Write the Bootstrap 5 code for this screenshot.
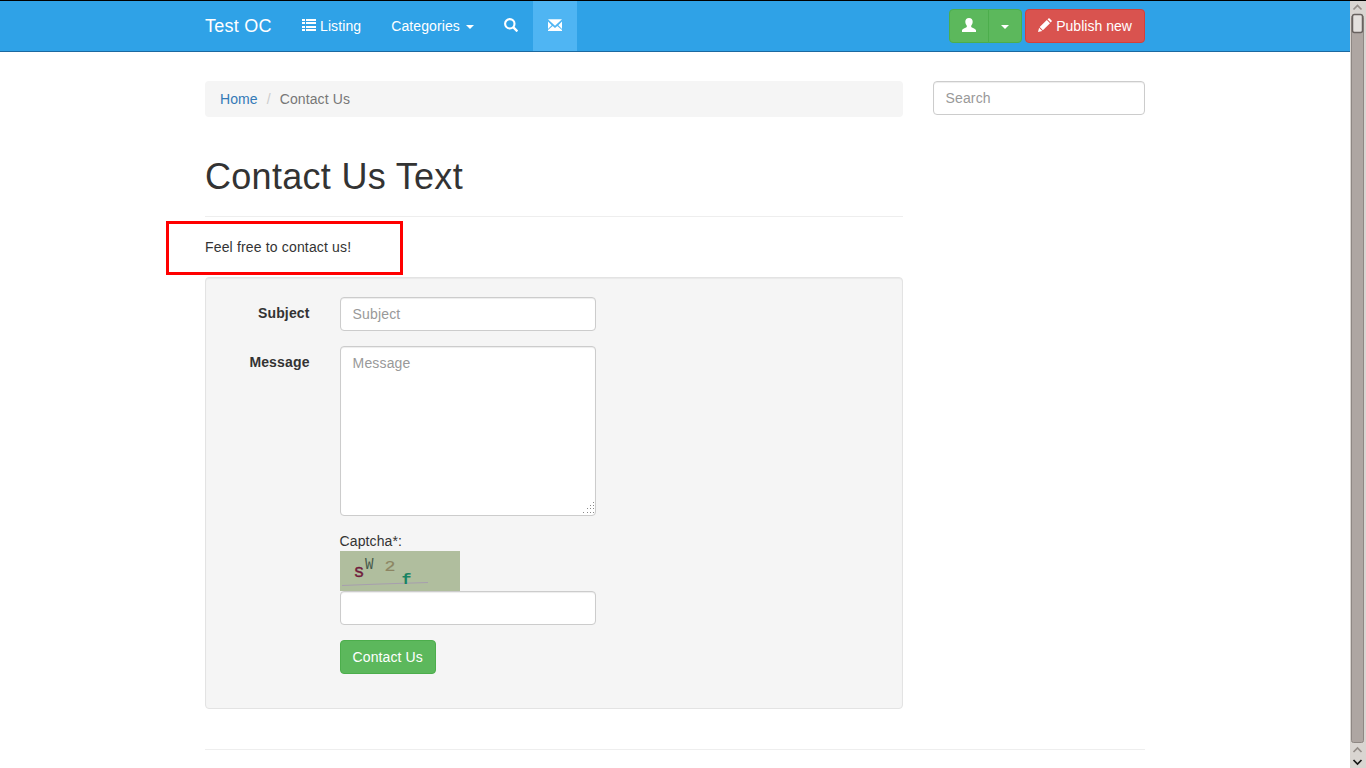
<!DOCTYPE html>
<html lang="en">
<head>
<meta charset="utf-8">
<meta name="viewport" content="width=device-width, initial-scale=1">
<title>Contact Us - Test OC</title>
<link href="https://cdn.jsdelivr.net/npm/bootstrap@5.3.0/dist/css/bootstrap.min.css" rel="stylesheet">
<script src="https://cdn.jsdelivr.net/npm/bootstrap@5.3.0/dist/js/bootstrap.bundle.min.js" defer></script>
<style>
html, body { height: 100%; overflow: hidden; }
body { font: 14px/20px "Liberation Sans", Arial, sans-serif; letter-spacing: .1px; color: #333; background: #fff; border-top: 1px solid #000; }
.page { overflow: hidden; height: 767px; }
.container { max-width: 970px; --bs-gutter-x: 30px; }
.row { --bs-gutter-x: 30px; }
.topbar { background: #2fa2e7; border-bottom: 1px solid #1c69a0; height: 51px; padding: 0; --bs-navbar-brand-margin-end: 0; }
.topbar .navbar-brand { font-size: 18px; line-height: 20px; padding: 15px; margin-left: -15px; color: #fff; width: 97px; white-space: nowrap; letter-spacing: .25px; }
.topbar .navbar-nav .nav-link { color: #fff; padding: 15px; line-height: 20px; height: 50px; white-space: nowrap; }
.topbar .nav-link.active { background: #4fb5f3; }
.glyph { width: 14px; height: 14px; display: inline-block; vertical-align: -1px; fill: currentColor; }
.caret-down { display: inline-block; border: 4px solid transparent; border-top-color: #fff; border-bottom: 0; margin-left: 2px; vertical-align: middle; }
.btn { font-size: 14px; line-height: 20px; padding: 6px 12px; border-radius: 4px; letter-spacing: .1px; }
.btn-success { --bs-btn-bg: #5cb85c; --bs-btn-border-color: #4cae4c; }
.btn-danger { --bs-btn-bg: #d9534f; --bs-btn-border-color: #d43f3a; letter-spacing: .03px; }
.toolbar-gap { gap: 3.5px; }
.form-control { height: 34px; padding: 6px 12px; font-size: 14px; line-height: 20px; letter-spacing: .15px; border: 1px solid #ccc; border-radius: 4px; box-shadow: inset 0 1px 1px rgba(0,0,0,.075); }
.form-control::placeholder { color: #999; }
textarea.form-control { height: 170px; resize: none; display: block; }
.breadcrumb { background: #f5f5f5; border-radius: 4px; padding: 8px 15px; margin: 0 0 40px; --bs-breadcrumb-item-padding-x: 9px; --bs-breadcrumb-divider-color: #ccc; --bs-breadcrumb-item-active-color: #777; }
.breadcrumb a { color: #337ab7; text-decoration: none; }
.page-title { border-bottom: 1px solid #eee; padding-bottom: 19px; margin-bottom: 20px; height: 60px; }
.page-title h1 { font-size: 36px; line-height: 39.6px; font-weight: 400; margin: 0; white-space: nowrap; letter-spacing: .3px; }
.intro { letter-spacing: .16px; }
.highlight-box { position: absolute; left: -39px; top: -16px; width: 237px; height: 54px; border: 3px solid #f00; }
.form-well { margin-top: 20px; background: #f5f5f5; border: 1px solid #e3e3e3; border-radius: 4px; padding: 19px; box-shadow: inset 0 1px 1px rgba(0,0,0,.05); height: 432px; }
.form-well .row { margin-bottom: 15px; }
.form-well label { font-weight: 700; padding-top: 6px; letter-spacing: .15px; }
.grip { position: absolute; right: 16px; bottom: 2px; }
.footer-rule { border-top: 1px solid #eee; margin-top: 40px; }
.scroller { width: 16px; background: #d9d5d1; height: 767px; }
</style>
</head>
<body class="d-flex">
<div class="page flex-grow-1">
  <nav class="navbar navbar-expand topbar">
    <div class="container">
      <a class="navbar-brand" href="#">Test OC</a>
      <ul class="navbar-nav me-auto">
        <li class="nav-item"><a class="nav-link" href="#"><svg class="glyph" viewBox="0 0 14 14"><path d="M0 1h3v2H0zM4 1h10v2H4zM0 4h3v2H0zM4 4h10v2H4zM0 8h3v2H0zM4 8h10v2H4zM0 11h3v2H0zM4 11h10v2H4z"/></svg> Listing</a></li>
        <li class="nav-item"><a class="nav-link" href="#">Categories <b class="caret-down"></b></a></li>
        <li class="nav-item"><a class="nav-link" href="#" aria-label="Search"><svg class="glyph" viewBox="0 0 14 14"><circle cx="5.8" cy="5.800" r="4.700" fill="none" stroke="currentColor" stroke-width="2.100"/><path d="m8.300 10 1.700-1.700 3.700 3.700q.5.500.1.900l-.8.800q-.5.400-.9 0z"/></svg></a></li>
        <li class="nav-item"><a class="nav-link active" href="#" aria-label="Contact"><svg class="glyph" viewBox="0 0 14 14"><path d="M0 1.300h14L7 7.800zM0 3.400l3.700 3.800L0 10.900zM14 3.400v7.500l-3.700-3.700zM0 13v-.9l4.700-4.200L7 10.100l2.300-2.200 4.700 4.200v.9z"/></svg></a></li>
      </ul>
      <div class="d-flex toolbar-gap">
        <div class="btn-group">
          <button class="btn btn-success" type="button" aria-label="Account"><svg class="glyph" viewBox="0 0 14 14"><path d="M7 0c2.400 0 3.700 1.600 3.700 3.800 0 1.500-.7 3-1.500 3.900v1.200c.5.8 4.600 1.600 4.800 3.300V14H0v-1.800c.2-1.700 4.300-2.500 4.800-3.300V7.700C4 6.800 3.300 5.300 3.300 3.800 3.300 1.600 4.600 0 7 0z"/></svg></button>
          <button class="btn btn-success" type="button" aria-label="Account menu"><b class="caret-down ms-0"></b></button>
        </div>
        <a class="btn btn-danger text-nowrap" href="#"><svg class="glyph" viewBox="0 0 14 14"><path d="m0 14 1.100-4.300 3.200 3.200zM1.700 9.100 8.800 2l3.200 3.200-7.100 7.100zM9.500 1.300l.9-.9q.6-.5 1.200 0l2 2q.5.600 0 1.200l-.9.900z"/></svg> Publish new</a>
      </div>
    </div>
  </nav>

  <main class="container">
    <div class="row" style="padding-top:29px">
      <div class="col-9">
        <ol class="breadcrumb">
          <li class="breadcrumb-item"><a href="#">Home</a></li>
          <li class="breadcrumb-item active">Contact Us</li>
        </ol>
        <div class="page-title"><h1>Contact Us Text</h1></div>
        <div class="position-relative">
          <p class="mb-0 intro">Feel free to contact us!</p>
          <div class="highlight-box"></div>
        </div>
        <form class="form-well">
          <div class="row">
            <label class="col-2 text-end" for="subject">Subject</label>
            <div class="col-5"><input class="form-control" id="subject" placeholder="Subject"></div>
          </div>
          <div class="row">
            <label class="col-2 text-end" for="message">Message</label>
            <div class="col-5 position-relative">
              <textarea class="form-control" id="message" placeholder="Message"></textarea>
              <svg class="grip" width="12" height="12" fill="#888"><path d="M10 0h1v1h-1zM7 3h1v1H7zM10 3h1v1h-1zM4 6h1v1H4zM7 6h1v1H7zM10 6h1v1h-1zM0 10h1v1H0zM4 10h1v1H4zM7 10h1v1H7zM10 10h1v1h-1z"/></svg>
            </div>
          </div>
          <div class="row">
            <div class="col-5 offset-2">
              <div>Captcha*:</div>
              <svg class="d-block" width="120" height="40" font-family="Liberation Mono, monospace" letter-spacing="0">
                <rect width="120" height="40" fill="#b0be9e"/>
                <path d="M2 34.500 40 33 88 31.500" stroke="#a79fae" fill="none"/>
                <text x="13.500" y="26" font-size="18" textLength="11" lengthAdjust="spacingAndGlyphs" fill="#711b3c" stroke="#711b3c" stroke-width=".4">s</text>
                <text x="25" y="18" font-size="16" textLength="8.500" lengthAdjust="spacingAndGlyphs" fill="#46584a">W</text>
                <text x="44.500" y="20" font-size="15" textLength="11" lengthAdjust="spacingAndGlyphs" fill="#8c8562" stroke="#8c8562" stroke-width=".2">2</text>
                <text x="61.500" y="33" font-size="15" font-weight="700" textLength="10" lengthAdjust="spacingAndGlyphs" fill="#198463">f</text>
              </svg>
              <input class="form-control" aria-label="Captcha">
            </div>
          </div>
          <div class="row">
            <div class="col-5 offset-2"><button class="btn btn-success d-block" type="button">Contact Us</button></div>
          </div>
        </form>
      </div>
      <div class="col-3"><input class="form-control" placeholder="Search" aria-label="Search"></div>
    </div>
    <div class="footer-rule"></div>
  </main>
</div>
<aside class="scroller flex-shrink-0" aria-hidden="true">
  <svg class="d-block" width="16" height="767">
    <rect x="1.500" y="14.500" width="12" height="727" rx="2" fill="#aea6a2" stroke="#8e8783"/>
    <rect x="2.500" y="13.500" width="10" height="18" rx="2" fill="#e4e1de" stroke="#68625f" stroke-width="1.500"/>
    <g fill="none" stroke-width="1.700"><path d="m3.500 8.500 4-4 4 4M3.500 751l4-4 4 4" stroke="#958e89"/><path d="m3.500 759 4 4 4-4" stroke="#171615"/></g>
  </svg>
</aside>
</body>
</html>
